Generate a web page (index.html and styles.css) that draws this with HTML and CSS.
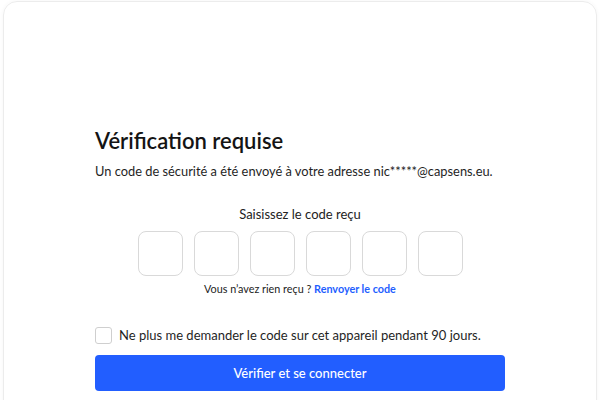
FILE: index.html
```html
<!DOCTYPE html>
<html lang="fr">
<head>
<meta charset="utf-8">
<title>Vérification requise</title>
<link rel="stylesheet" href="styles.css">
</head>
<body>
<div class="card">
  <div class="content">
    <h1 class="title">Vérification requise</h1>
    <p class="subtitle">Un code de sécurité a été envoyé à votre adresse nic*****@capsens.eu.</p>
    <div class="code-block">
      <p class="code-label">Saisissez le code reçu</p>
      <div class="code-inputs">
        <input class="code-box" type="text" maxlength="1">
        <input class="code-box" type="text" maxlength="1">
        <input class="code-box" type="text" maxlength="1">
        <input class="code-box" type="text" maxlength="1">
        <input class="code-box" type="text" maxlength="1">
        <input class="code-box" type="text" maxlength="1">
      </div>
      <p class="resend">Vous n’avez rien reçu ? <a class="resend-link" href="#">Renvoyer le code</a></p>
    </div>
    <label class="remember">
      <span class="checkbox"></span>
      <span class="remember-text">Ne plus me demander le code sur cet appareil pendant 90 jours.</span>
    </label>
    <button class="submit" type="button">Vérifier et se connecter</button>
  </div>
</div>
</body>
</html>
```
FILE: styles.css
```css
html, body {
  margin: 0;
  padding: 0;
  background: #ffffff;
  overflow: hidden;
}
body {
  font-family: "Lato", "Liberation Sans", sans-serif;
  color: #1b1b1b;
}
.card {
  margin: 1px 3px 0;
  height: 440px;
  border: 1px solid #ececec;
  border-radius: 14px;
  box-shadow: 0 0 4px rgba(0, 0, 0, 0.04);
  box-sizing: border-box;
}
.content {
  width: 410px;
  margin: 0 auto;
  padding-top: 125px;
}
.title {
  margin: 0;
  font-size: 22px;
  line-height: 28px;
  font-weight: 600;
  color: #141414;
}
.subtitle {
  margin: 7px 0 0;
  font-size: 12.85px;
  line-height: 18px;
  color: #1f1f1f;
}
.code-block {
  display: flex;
  flex-direction: column;
  align-items: center;
  margin-top: 25px;
}
.code-label {
  margin: 0;
  font-size: 13px;
  line-height: 18px;
  color: #222;
}
.code-inputs {
  display: flex;
  gap: 11px;
  margin-top: 8px;
}
.code-box {
  width: 45px;
  height: 45px;
  box-sizing: border-box;
  border: 1.5px solid #d9d9d9;
  border-radius: 8px;
  background: #fff;
  padding: 0;
  outline: none;
}
.resend {
  margin: 6px 0 0;
  font-size: 10.8px;
  line-height: 14px;
  color: #222;
}
.resend-link {
  color: #1f5fff;
  font-weight: 700;
  text-decoration: none;
}
.remember {
  display: flex;
  align-items: center;
  gap: 7px;
  margin-top: 30px;
}
.checkbox {
  width: 17px;
  height: 17px;
  box-sizing: border-box;
  border: 1px solid #cfcfcf;
  border-radius: 3px;
  background: #fff;
  flex: none;
}
.remember-text {
  font-size: 13px;
  line-height: 18px;
  color: #1f1f1f;
}
.submit {
  display: block;
  width: 100%;
  height: 36px;
  margin-top: 11px;
  border: none;
  border-radius: 4px;
  background: #225eff;
  color: #fff;
  font-family: inherit;
  font-size: 13px;
  font-weight: 500;
}
```
